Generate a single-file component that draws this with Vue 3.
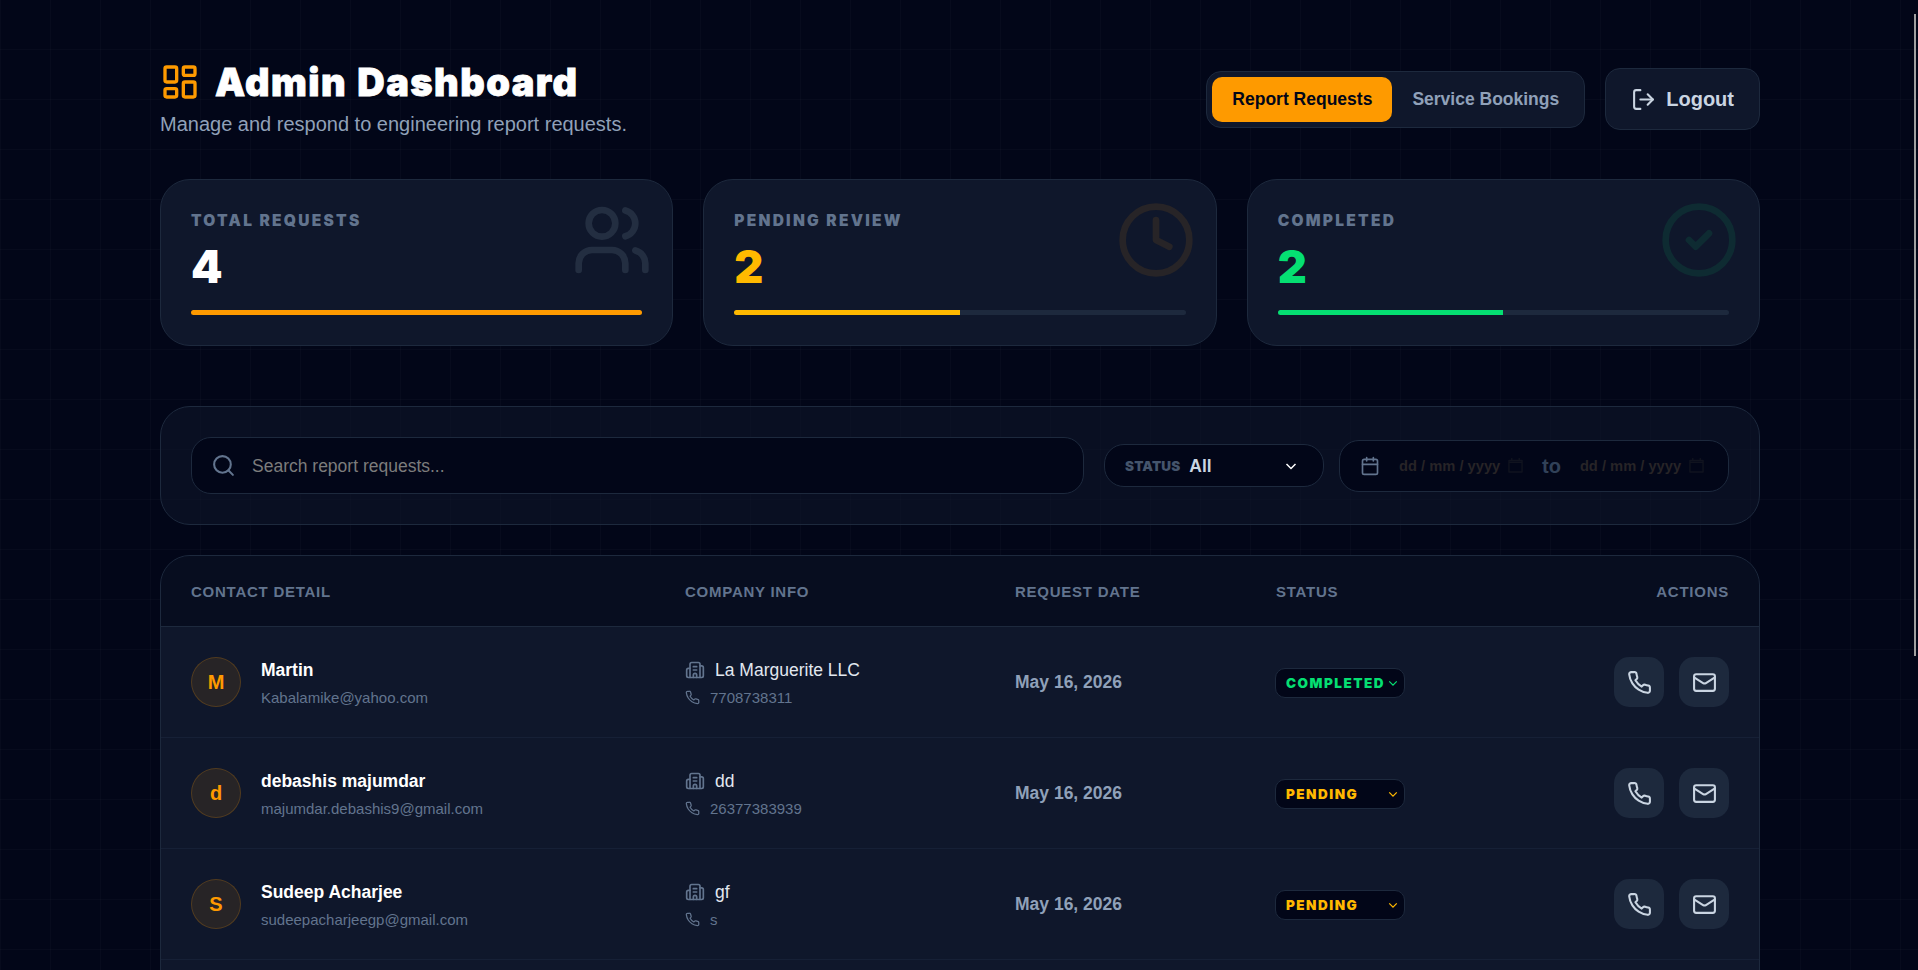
<script setup>
import { ref, computed } from 'vue'

const activeTab = ref('reports')
const search = ref('')

const tabs = [
  { id: 'reports', label: 'Report Requests' },
  { id: 'bookings', label: 'Service Bookings' }
]

const stats = [
  { id: 'total', label: 'TOTAL REQUESTS', value: 4 },
  { id: 'pending', label: 'PENDING REVIEW', value: 2 },
  { id: 'completed', label: 'COMPLETED', value: 2 }
]

const requests = ref([
  { name: 'Martin', email: 'Kabalamike@yahoo.com', company: 'La Marguerite LLC', phone: '7708738311', date: 'May 16, 2026', status: 'completed' },
  { name: 'debashis majumdar', email: 'majumdar.debashis9@gmail.com', company: 'dd', phone: '26377383939', date: 'May 16, 2026', status: 'pending' },
  { name: 'Sudeep Acharjee', email: 'sudeepacharjeegp@gmail.com', company: 'gf', phone: 's', date: 'May 16, 2026', status: 'pending' }
])

const filteredRequests = computed(() => {
  const term = search.value.toLowerCase()
  return requests.value.filter((r) => (r.name + r.email + r.company).toLowerCase().includes(term))
})

const percent = (value) => `${(value / stats[0].value) * 100}%`
</script>

<template>
  <div class="page">
    <div class="container">
      <header class="header">
        <div>
          <h1 class="title">
            <svg class="icon title-icon" viewBox="0 0 24 24">
              <rect width="7" height="9" x="3" y="3" rx="1" />
              <rect width="7" height="5" x="14" y="3" rx="1" />
              <rect width="7" height="9" x="14" y="12" rx="1" />
              <rect width="7" height="5" x="3" y="16" rx="1" />
            </svg>
            <span>Admin Dashboard</span>
          </h1>
          <p class="subtitle">Manage and respond to engineering report requests.</p>
        </div>
        <div class="header-actions">
          <div class="tabs">
            <button
              v-for="tab in tabs"
              :key="tab.id"
              class="tab"
              :class="{ active: activeTab === tab.id }"
              @click="activeTab = tab.id"
            >
              {{ tab.label }}
            </button>
          </div>
          <button class="logout">
            <svg class="icon" viewBox="0 0 24 24">
              <path d="m16 17 5-5-5-5" />
              <path d="M21 12H9" />
              <path d="M9 21H5a2 2 0 0 1-2-2V5a2 2 0 0 1 2-2h4" />
            </svg>
            Logout
          </button>
        </div>
      </header>

      <section class="stats">
        <div v-for="stat in stats" :key="stat.id" class="stat" :class="stat.id">
          <svg class="icon stat-icon" viewBox="0 0 24 24">
            <template v-if="stat.id === 'total'">
              <path d="M16 21v-2a4 4 0 0 0-4-4H6a4 4 0 0 0-4 4v2" />
              <path d="M16 3.128a4 4 0 0 1 0 7.744" />
              <path d="M22 21v-2a4 4 0 0 0-3-3.87" />
              <circle cx="9" cy="7" r="4" />
            </template>
            <template v-else>
              <circle cx="12" cy="12" r="10" />
              <path v-if="stat.id === 'pending'" d="M12 6v6l4 2" />
              <path v-else d="m9 12 2 2 4-4" />
            </template>
          </svg>
          <p class="stat-label">{{ stat.label }}</p>
          <p class="stat-value">{{ stat.value }}</p>
          <div class="track">
            <div class="fill" :style="{ width: percent(stat.value) }"></div>
          </div>
        </div>
      </section>

      <section class="filters">
        <label class="search">
          <svg class="icon" viewBox="0 0 24 24">
            <path d="m21 21-4.34-4.34" />
            <circle cx="11" cy="11" r="8" />
          </svg>
          <input v-model="search" type="text" placeholder="Search report requests..." />
        </label>
        <div class="status-filter">
          <span class="status-caption">STATUS</span>
          <span class="status-current">All</span>
          <svg class="icon chevron" viewBox="0 0 12 12"><path d="m1.5 4 4.5 4.5L10.5 4" /></svg>
        </div>
        <div class="dates">
          <svg class="icon date-icon" viewBox="0 0 24 24">
            <path d="M8 2v4" />
            <path d="M16 2v4" />
            <rect width="18" height="18" x="3" y="4" rx="2" />
            <path d="M3 10h18" />
          </svg>
          <div class="date-input">
            <span>dd / mm / yyyy</span>
            <svg class="icon picker" viewBox="0 0 16 16">
              <path d="M1 2.5h14v12.5H1zM1 4.5h14M4 .5v2M12 .5v2" />
            </svg>
          </div>
          <span class="date-to">to</span>
          <div class="date-input">
            <span>dd / mm / yyyy</span>
            <svg class="icon picker" viewBox="0 0 16 16">
              <path d="M1 2.5h14v12.5H1zM1 4.5h14M4 .5v2M12 .5v2" />
            </svg>
          </div>
        </div>
      </section>

      <section class="table">
        <div class="row head">
          <span>CONTACT DETAIL</span>
          <span>COMPANY INFO</span>
          <span>REQUEST DATE</span>
          <span>STATUS</span>
          <span class="right">ACTIONS</span>
        </div>
        <div v-for="req in filteredRequests" :key="req.email" class="row">
          <div class="contact">
            <div class="avatar">{{ req.name[0] }}</div>
            <div class="stack">
              <p class="line name">{{ req.name }}</p>
              <p class="line muted">{{ req.email }}</p>
            </div>
          </div>
          <div class="stack">
            <div class="company">
              <svg class="icon" viewBox="0 0 24 24">
                <path d="M10 12h4" />
                <path d="M10 8h4" />
                <path d="M14 21v-3a2 2 0 0 0-4 0v3" />
                <path d="M6 10H4a2 2 0 0 0-2 2v7a2 2 0 0 0 2 2h16a2 2 0 0 0 2-2V9a2 2 0 0 0-2-2h-2" />
                <path d="M6 21V5a2 2 0 0 1 2-2h8a2 2 0 0 1 2 2v16" />
              </svg>
              <span class="line">{{ req.company }}</span>
            </div>
            <div class="phone">
              <svg class="icon" viewBox="0 0 24 24">
                <path d="M22 16.92v3a2 2 0 0 1-2.18 2 19.79 19.79 0 0 1-8.63-3.07 19.5 19.5 0 0 1-6-6 19.79 19.79 0 0 1-3.07-8.67A2 2 0 0 1 4.11 2h3a2 2 0 0 1 2 1.72 12.84 12.84 0 0 0 .7 2.81 2 2 0 0 1-.45 2.11L8.09 9.91a16 16 0 0 0 6 6l1.27-1.27a2 2 0 0 1 2.11-.45 12.84 12.84 0 0 0 2.81.7A2 2 0 0 1 22 16.92z" />
              </svg>
              <span class="line muted">{{ req.phone }}</span>
            </div>
          </div>
          <div class="date">{{ req.date }}</div>
          <div>
            <div class="status-select" :class="req.status">
              <span>{{ req.status.toUpperCase() }}</span>
              <svg class="icon chevron" viewBox="0 0 12 12"><path d="m1.5 4 4.5 4.5L10.5 4" /></svg>
            </div>
          </div>
          <div class="actions">
            <button class="action">
              <svg class="icon" viewBox="0 0 24 24">
                <path d="M22 16.92v3a2 2 0 0 1-2.18 2 19.79 19.79 0 0 1-8.63-3.07 19.5 19.5 0 0 1-6-6 19.79 19.79 0 0 1-3.07-8.67A2 2 0 0 1 4.11 2h3a2 2 0 0 1 2 1.72 12.84 12.84 0 0 0 .7 2.81 2 2 0 0 1-.45 2.11L8.09 9.91a16 16 0 0 0 6 6l1.27-1.27a2 2 0 0 1 2.11-.45 12.84 12.84 0 0 0 2.81.7A2 2 0 0 1 22 16.92z" />
              </svg>
            </button>
            <button class="action">
              <svg class="icon" viewBox="0 0 24 24">
                <path d="m22 7-8.991 5.727a2 2 0 0 1-2.009 0L2 7" />
                <rect x="2" y="4" width="20" height="16" rx="2" />
              </svg>
            </button>
          </div>
        </div>
      </section>
    </div>
    <div class="scroll-thumb"></div>
  </div>
</template>

<style>
html {
  font-size: 20px;
}

body {
  background: #020618;
  overflow: hidden;
}
</style>

<style scoped>
* {
  box-sizing: border-box;
  margin: 0;
}

button,
input {
  font-family: inherit;
  border: none;
  background: none;
  padding: 0;
  cursor: pointer;
}

.page {
  position: relative;
  height: 970px;
  overflow: hidden;
  background-color: #020618;
  background-image:
    linear-gradient(to right, rgba(255, 255, 255, 0.02) 1px, transparent 1px),
    linear-gradient(to bottom, rgba(255, 255, 255, 0.02) 1px, transparent 1px);
  background-size: 50px 50px;
  background-position: 0 -1px;
  color: #fff;
  font-family: "Liberation Sans", Arial, sans-serif;
  font-size: 1rem;
  line-height: 1.5;
}

.container {
  width: 1600px;
  margin-left: 160px;
  padding-top: 59px;
}

.icon {
  width: 1.25rem;
  height: 1.25rem;
  flex-shrink: 0;
  fill: none;
  stroke: currentColor;
  stroke-width: 2;
  stroke-linecap: round;
  stroke-linejoin: round;
}

.header {
  display: flex;
  justify-content: space-between;
  align-items: center;
  margin-bottom: 2rem;
}

.title {
  display: flex;
  align-items: center;
  gap: 0.75rem;
  height: 2.25rem;
  font-family: Inter, sans-serif;
  font-size: 1.9rem;
  font-weight: 900;
  line-height: 2.25rem;
  letter-spacing: 0.038em;
  word-spacing: 0.03em;
}

.title span {
  padding-top: 2px;
  -webkit-text-stroke: 0.8px currentColor;
}

.title-icon {
  width: 2rem;
  height: 2rem;
  color: #fe9a00;
}

.subtitle {
  margin-top: 0.25rem;
  color: #90a1b9;
}

.header-actions {
  display: flex;
  align-items: center;
  gap: 1rem;
}

.tabs {
  display: flex;
  padding: 0.25rem;
  background: #0f172b;
  border: 1px solid #1d293d;
  border-radius: 0.75rem;
}

.tab {
  padding: 0.5rem 1rem;
  border-radius: 0.5rem;
  font-size: 0.875rem;
  font-weight: 700;
  line-height: 1.25rem;
  color: #90a1b9;
}

.tab.active {
  background: #fe9a00;
  color: #020618;
}

.logout {
  display: flex;
  align-items: center;
  gap: 0.5rem;
  height: 62px;
  padding: 0 1.25rem;
  background: #0f172b;
  border: 1px solid #1d293d;
  border-radius: 0.75rem;
  color: #cad5e2;
  font-size: 1rem;
  font-weight: 700;
}

.stats {
  display: grid;
  grid-template-columns: repeat(3, 1fr);
  gap: 1.5rem;
  margin-bottom: 3rem;
}

.stat {
  position: relative;
  padding: 1.5rem;
  background: #0f172b;
  border: 1px solid #1d293d;
  border-radius: 1.5rem;
}

.stat-icon {
  position: absolute;
  top: 1rem;
  right: 1rem;
  width: 4rem;
  height: 4rem;
  color: #232e41;
}

.pending .stat-icon {
  color: #272427;
}

.stat.completed .stat-icon {
  color: #0e2b32;
}

.stat-label {
  height: 1rem;
  margin-bottom: 0.5rem;
  padding-top: 1px;
  color: #62748e;
  font-family: Inter, sans-serif;
  font-size: 0.775rem;
  font-weight: 900;
  line-height: 1rem;
  letter-spacing: 0.145em;
}

.stat-value {
  height: 2.5rem;
  padding-top: 2px;
  font-family: Inter, sans-serif;
  font-size: 2.25rem;
  font-weight: 900;
  line-height: 2.5rem;
}

.stat.pending .stat-value {
  color: #ffb900;
}

.stat.completed .stat-value {
  color: #05df72;
}

.track {
  height: 0.25rem;
  margin-top: 1rem;
  background: #1d293d;
  border-radius: 1rem;
  overflow: hidden;
}

.fill {
  height: 100%;
  background: #fe9a00;
}

.stat.pending .fill {
  background: #ffb900;
}

.stat.completed .fill {
  background: #05df72;
}

.filters {
  display: flex;
  align-items: center;
  padding: 1.5rem;
  margin-bottom: 1.5rem;
  background: rgba(15, 23, 43, 0.5);
  border: 1px solid #1d293d;
  border-radius: 1.5rem;
}

.search,
.status-filter,
.dates {
  display: flex;
  align-items: center;
  background: #020618;
  border: 1px solid #1d293d;
  border-radius: 1rem;
}

.search {
  flex: 1;
  height: 57px;
  padding-left: 0.95rem;
  gap: 0.8rem;
  margin-right: 1rem;
  color: #62748e;
}

.search input {
  flex: 1;
  padding-top: 2px;
  outline: none;
  color: #fff;
  font-size: 0.875rem;
}

.search input::placeholder {
  color: #7c7c7c;
}

.status-filter {
  width: 220px;
  height: 43px;
  padding: 0 1.3rem 0 1rem;
  margin-right: 0.75rem;
}

.status-caption {
  margin-right: 0.45rem;
  padding-top: 1px;
  color: #45556c;
  font-family: Inter, sans-serif;
  font-size: 0.675rem;
  font-weight: 900;
  letter-spacing: 0.01em;
}

.status-current {
  padding-top: 1px;
  color: #cad5e2;
  font-size: 0.875rem;
  font-weight: 700;
}

.chevron {
  width: 12px;
  height: 12px;
  margin-left: auto;
  stroke-width: 1.5;
  stroke-linecap: butt;
  stroke-linejoin: miter;
}

.dates {
  width: 390px;
  height: 52px;
  padding-left: 1rem;
}

.date-icon {
  width: 1rem;
  height: 1rem;
  color: #62748e;
}

.date-input {
  display: flex;
  align-items: center;
  justify-content: space-between;
  width: 124px;
  margin-left: 0.95rem;
  color: #272427;
  font-size: 0.735rem;
  font-weight: 700;
  white-space: nowrap;
}

.date-input span {
  padding-top: 1px;
}

.picker {
  width: 15px;
  height: 15px;
  color: #10131f;
  stroke-width: 1.5;
}

.date-to {
  margin-left: 0.95rem;
  color: #314158;
  font-size: 1rem;
  font-weight: 700;
}

.table {
  min-height: 480px;
  background: #0f172b;
  border: 1px solid #1d293d;
  border-radius: 1.5rem;
  overflow: hidden;
}

.row {
  display: grid;
  grid-template-columns: 494px 330px 261px 1fr 150px;
  align-items: center;
  height: 111px;
  padding: 0 1.5rem;
  border-bottom: 1px solid #162036;
}

.head {
  height: 71px;
  padding-top: 2px;
  background: rgba(2, 6, 24, 0.6);
  border-bottom-color: #1d293d;
  color: #62748e;
  font-size: 0.75rem;
  font-weight: 700;
  letter-spacing: 0.05em;
}

.right {
  text-align: right;
}

.contact {
  display: flex;
  align-items: center;
  gap: 1rem;
}

.avatar {
  display: flex;
  align-items: center;
  justify-content: center;
  width: 2.5rem;
  height: 2.5rem;
  background: rgba(254, 154, 0, 0.1);
  border: 1px solid rgba(254, 154, 0, 0.2);
  border-radius: 50%;
  color: #fe9a00;
  font-weight: 700;
}

.stack {
  display: flex;
  flex-direction: column;
  gap: 0.25rem;
}

.line {
  padding-top: 2px;
  font-size: 0.875rem;
  line-height: 23px;
}

.name {
  font-weight: 700;
}

.company,
.phone {
  display: flex;
  align-items: center;
  gap: 0.5rem;
}

.company {
  color: #e2e8f0;
}

.company .icon {
  width: 1rem;
  height: 1rem;
  color: #62748e;
}

.muted {
  color: #62748e;
  font-size: 0.75rem;
  line-height: 18px;
}

.phone .icon {
  width: 0.75rem;
  height: 0.75rem;
  color: #62748e;
}

.date {
  color: #90a1b9;
  font-size: 0.875rem;
  font-weight: 700;
}

.status-select {
  display: flex;
  align-items: center;
  width: 130px;
  height: 30px;
  margin-top: 2px;
  margin-left: -1px;
  padding: 0 0.3rem 0 0.5rem;
  background: #020618;
  border: 1px solid #1d293d;
  border-radius: 0.5rem;
  font-family: Inter, sans-serif;
  font-size: 0.675rem;
  font-weight: 900;
  letter-spacing: 0.11em;
}

.status-select span {
  padding-top: 1px;
}

.status-select.completed {
  color: #05df72;
}

.status-select.pending {
  color: #ffb900;
}

.status-select .chevron {
  width: 10px;
  height: 10px;
}

.actions {
  display: flex;
  justify-content: flex-end;
  gap: 0.75rem;
}

.action {
  display: flex;
  align-items: center;
  justify-content: center;
  width: 2.5rem;
  height: 2.5rem;
  background: #1d293d;
  border-radius: 0.75rem;
  color: #cad5e2;
}

/* overlay scrollbar */
.scroll-thumb {
  position: absolute;
  top: 14px;
  right: 2px;
  width: 2px;
  height: 642px;
  background: #9f9f9f;
}
</style>
